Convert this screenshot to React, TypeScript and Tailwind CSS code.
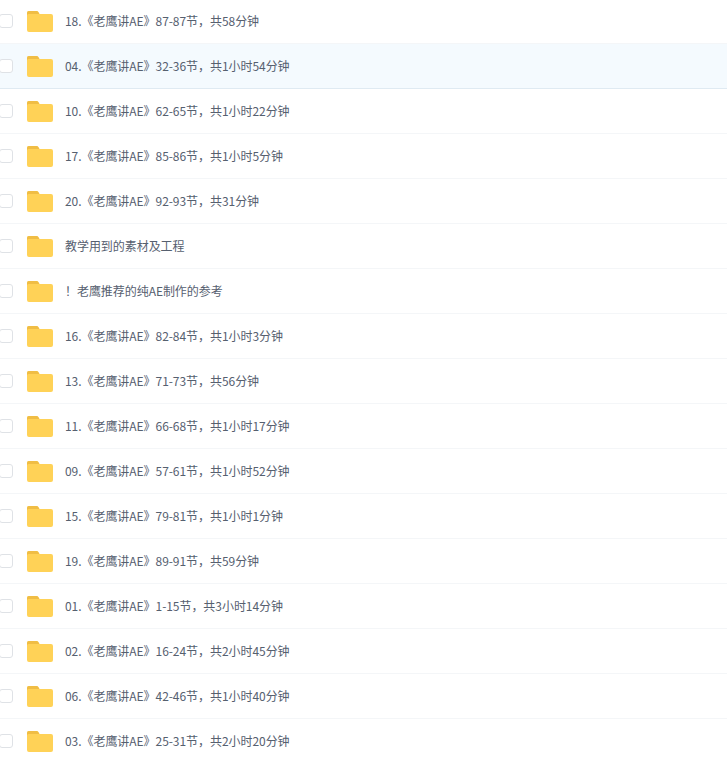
const rows = [
  "18.《老鹰讲AE》87-87节，共58分钟",
  "04.《老鹰讲AE》32-36节，共1小时54分钟",
  "10.《老鹰讲AE》62-65节，共1小时22分钟",
  "17.《老鹰讲AE》85-86节，共1小时5分钟",
  "20.《老鹰讲AE》92-93节，共31分钟",
  "教学用到的素材及工程",
  "！老鹰推荐的纯AE制作的参考",
  "16.《老鹰讲AE》82-84节，共1小时3分钟",
  "13.《老鹰讲AE》71-73节，共56分钟",
  "11.《老鹰讲AE》66-68节，共1小时17分钟",
  "09.《老鹰讲AE》57-61节，共1小时52分钟",
  "15.《老鹰讲AE》79-81节，共1小时1分钟",
  "19.《老鹰讲AE》89-91节，共59分钟",
  "01.《老鹰讲AE》1-15节，共3小时14分钟",
  "02.《老鹰讲AE》16-24节，共2小时45分钟",
  "06.《老鹰讲AE》42-46节，共1小时40分钟",
  "03.《老鹰讲AE》25-31节，共2小时20分钟",
];

function Folder() {
  return (
    <svg width="26" height="21" viewBox="0 0 26 21" className="block shrink-0">
      <path d="M0 2a2 2 0 0 1 2-2h7.5a2 2 0 0 1 1.6.8L12.5 3H24a2 2 0 0 1 2 2v14a2 2 0 0 1-2 2H2a2 2 0 0 1-2-2z" fill="#ffd257" />
      <path d="M0 2a2 2 0 0 1 2-2h7.5a2 2 0 0 1 1.6.8L12.5 3H1.5A1.5 1.5 0 0 0 0 4.5z" fill="#f0bd45" />
    </svg>
  );
}

export default function App() {
  return (
    <div
      className="w-[727px] h-[757px] overflow-hidden bg-white text-[12px] text-[#56606f]"
      style={{ fontFamily: '"Noto Sans CJK SC", sans-serif' }}
    >
      <div className="-mt-px">
        {rows.map((t, i) => (
          <div
            key={t}
            className={`flex h-[45px] items-center border-b pt-[2px] ${
              i === 1 ? "bg-[#f4fafe] border-[#dfeaf2]" : "border-[#f4f6f8]"
            }`}
          >
            <div className="mb-[2px] h-[14px] w-[14px] shrink-0 -ml-px rounded-[3px] border border-[#dfe2e6] bg-white" />
            <div className="ml-[14px] mb-px">
              <Folder />
            </div>
            <span className="ml-3 mb-[2px] whitespace-nowrap tracking-[-0.05px]">{t}</span>
          </div>
        ))}
      </div>
    </div>
  );
}
